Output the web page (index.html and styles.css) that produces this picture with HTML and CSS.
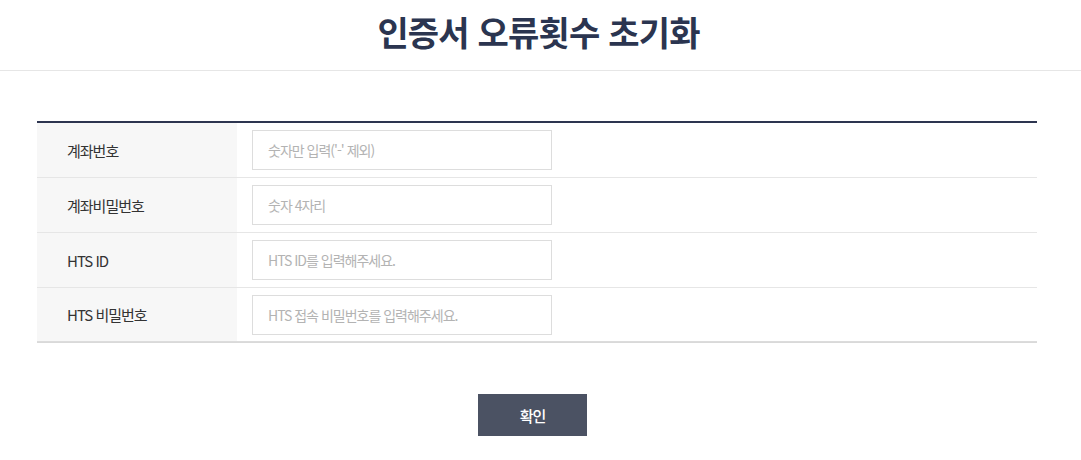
FILE: index.html
```html
<!DOCTYPE html>
<html lang="ko">
<head>
<meta charset="utf-8">
<link rel="stylesheet" href="styles.css">
</head>
<body>
<header class="header">
  <h1 class="title">인증서 오류횟수 초기화</h1>
</header>
<main class="content">
  <div class="form-table">
    <div class="row">
      <div class="label">계좌번호</div>
      <div class="field"><input class="input" type="text" placeholder="숫자만 입력('-' 제외)"></div>
    </div>
    <div class="row">
      <div class="label">계좌비밀번호</div>
      <div class="field"><input class="input" type="password" placeholder="숫자 4자리"></div>
    </div>
    <div class="row">
      <div class="label">HTS ID</div>
      <div class="field"><input class="input" type="text" placeholder="HTS ID를 입력해주세요."></div>
    </div>
    <div class="row last">
      <div class="label">HTS 비밀번호</div>
      <div class="field"><input class="input" type="password" placeholder="HTS 접속 비밀번호를 입력해주세요."></div>
    </div>
  </div>
  <div class="actions">
    <button class="btn" type="button">확인</button>
  </div>
</main>
</body>
</html>
```
FILE: styles.css
```css
* { box-sizing: border-box; }
body {
  margin: 0;
  background: #fff;
  font-family: "Noto Sans CJK KR", "Noto Sans", sans-serif;
  color: #333;
}
.header {
  height: 71px;
  border-bottom: 1px solid #e6e6e6;
  display: flex;
  align-items: center;
  justify-content: center;
}
.title {
  margin: 0;
  font-size: 34px;
  font-weight: 700;
  color: #2b3550;
  letter-spacing: -0.8px;
  line-height: 1;
  padding-bottom: 7px;
  padding-right: 4px;
}
.content {
  padding: 50px 37px 0 37px;
}
.form-table {
  width: 1000px;
  border-top: 2px solid #2d3550;
  border-bottom: 1px solid #d9d9d9;
}
.row {
  display: flex;
  height: 55px;
  border-bottom: 1px solid #e6e6e6;
}
.row.last { border-bottom: 1px solid #dcdcdc; height: 54px; }
.label {
  width: 200px;
  background: #f7f7f7;
  display: flex;
  align-items: center;
  padding-left: 30px;
  font-size: 15px;
  letter-spacing: -1px;
  color: #333;
}
.field {
  flex: 1;
  display: flex;
  align-items: center;
  padding-left: 15px;
}
.input {
  width: 300px;
  height: 40px;
  border: 1px solid #dddddd;
  padding: 0 15px;
  font-family: inherit;
  font-size: 14px;
  letter-spacing: -1px;
  color: #333;
  outline: none;
  background: #fff;
}
.input::placeholder { color: #b3b3b3; }
.actions {
  width: 1000px;
  display: flex;
  justify-content: center;
  padding-top: 51px;
  padding-right: 9px;
}
.btn {
  width: 109px;
  height: 42px;
  border: 0;
  background: #4b5263;
  color: #fff;
  font-family: inherit;
  font-size: 15px;
  font-weight: 500;
  letter-spacing: -1px;
}
```
